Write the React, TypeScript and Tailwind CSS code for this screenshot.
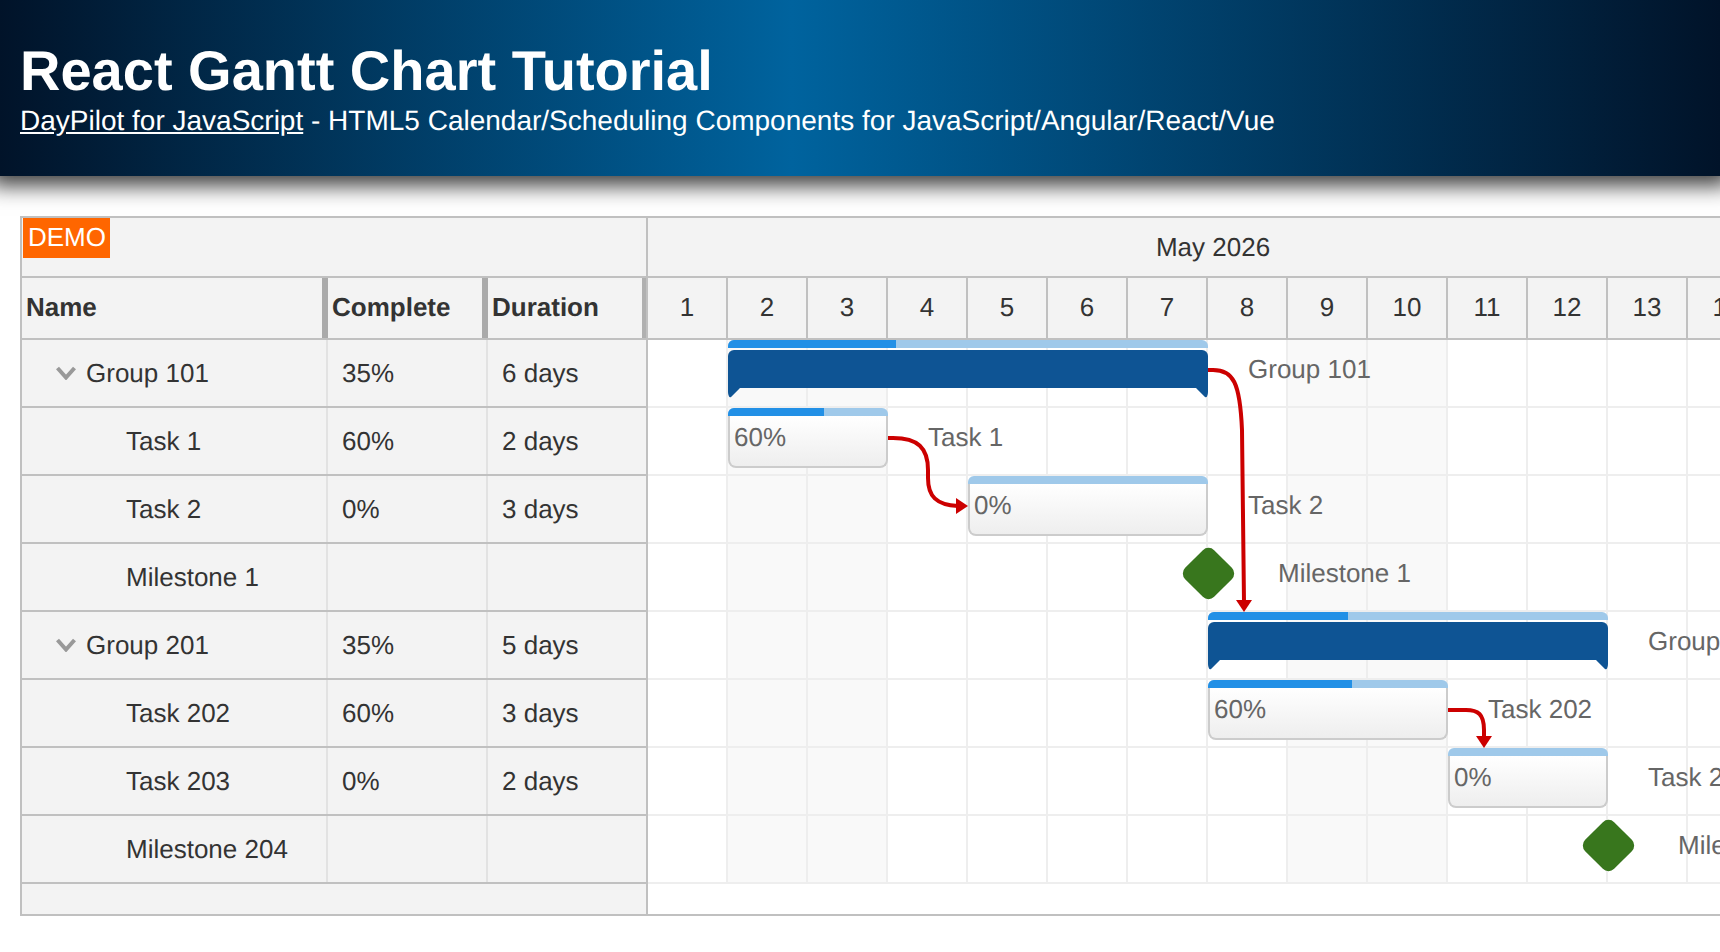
import React from 'react';

const DAY = 80;
const ROW = 68;
const DAYS = [1, 2, 3, 4, 5, 6, 7, 8, 9, 10, 11, 12, 13, 14];
const WEEKEND = [2, 3, 9, 10];

type RowData = { name: string; complete: string; duration: string; group?: boolean };

const ROWS: RowData[] = [
  { name: 'Group 101', complete: '35%', duration: '6 days', group: true },
  { name: 'Task 1', complete: '60%', duration: '2 days' },
  { name: 'Task 2', complete: '0%', duration: '3 days' },
  { name: 'Milestone 1', complete: '', duration: '' },
  { name: 'Group 201', complete: '35%', duration: '5 days', group: true },
  { name: 'Task 202', complete: '60%', duration: '3 days' },
  { name: 'Task 203', complete: '0%', duration: '2 days' },
  { name: 'Milestone 204', complete: '', duration: '' },
];

function Chevron() {
  return (
    <svg width="20" height="14" viewBox="0 0 20 14" className="shrink-0">
      <path d="M1.5 2 L10 11.5 L18.5 2" fill="none" stroke="#999999" strokeWidth="4" />
    </svg>
  );
}

function GroupBar({ row, start, days, pct, label }: { row: number; start: number; days: number; pct: number; label: string }) {
  const width = days * DAY;
  return (
    <>
      <div className="absolute h-[58px]" style={{ left: start * DAY, top: row * ROW, width }}>
        <div className="h-2 rounded-t-[6px] bg-[#9fc9ea] overflow-hidden">
          <div className="h-full bg-[#2290e6]" style={{ width: `${pct}%` }} />
        </div>
        <div className="mt-[2px] h-[38px] rounded-t-[6px] bg-[#0e5494]" />
        <svg width="14" height="10" viewBox="0 0 14 10" className="absolute left-0 top-[48px]">
          <path d="M0 0 H12 L3 9 Q1.5 10 0.8 8 Q0 6 0 4 Z" fill="#0e5494" />
        </svg>
        <svg width="14" height="10" viewBox="0 0 14 10" className="absolute right-0 top-[48px]">
          <path d="M14 0 H2 L11 9 Q12.5 10 13.2 8 Q14 6 14 4 Z" fill="#0e5494" />
        </svg>
      </div>
      <Label row={row} left={start * DAY + width + 40} text={label} />
    </>
  );
}

function TaskBar({ row, start, days, pct, label }: { row: number; start: number; days: number; pct: number; label: string }) {
  const width = days * DAY;
  return (
    <>
      <div className="absolute h-[60px]" style={{ left: start * DAY, top: row * ROW, width }}>
        <div className="h-2 rounded-t-[6px] bg-[#9fc9ea] overflow-hidden">
          <div className="h-full bg-[#2290e6]" style={{ width: `${pct}%` }} />
        </div>
        <div className="h-[52px] rounded-b-[8px] border-x-2 border-b-2 border-[#cccccc] bg-gradient-to-b from-white to-[#eeeeee] px-1 pt-[6px] leading-[30px] text-[#666666]">
          {pct}%
        </div>
      </div>
      <Label row={row} left={start * DAY + width + 40} text={label} />
    </>
  );
}

function Milestone({ row, at, label }: { row: number; at: number; label: string }) {
  return (
    <>
      <div
        className="absolute h-[41px] w-[41px] rotate-45 rounded-lg bg-[#38761d]"
        style={{ left: at * DAY - 20, top: row * ROW + 9 }}
      />
      <Label row={row} left={at * DAY + 70} text={label} />
    </>
  );
}

function Label({ row, left, text }: { row: number; left: number; text: string }) {
  return (
    <div
      className="absolute whitespace-nowrap leading-[30px] text-[#666666]"
      style={{ left, top: row * ROW + 14 }}
    >
      {text}
    </div>
  );
}

function Links() {
  return (
    <svg width="1072" height="544" className="absolute left-0 top-0 pointer-events-none">
      <g transform="translate(-648 -340)" fill="none" stroke="#cc0000" strokeWidth="4">
        <path d="M1208 370 H1213 C1233 370 1240 382 1242 430 L1244 602" />
        <path d="M888 438 H893 C918 438 928 448 928 470 V478 C928 496 936 505 958 506" />
        <path d="M1448 710 H1466 C1478 710 1484 714 1484 730 V738" />
      </g>
      <g transform="translate(-648 -340)" fill="#cc0000">
        <path d="M1236 600 H1252 L1244 612 Z" />
        <path d="M956 498 L968 506 L956 514 Z" />
        <path d="M1476 736 H1492 L1484 748 Z" />
      </g>
    </svg>
  );
}

export default function App() {
  return (
    <div className="h-[952px] overflow-hidden bg-white font-['Liberation_Sans',Arial,sans-serif] text-[26px] text-[#333333] [text-rendering:geometricPrecision]">
      <header className="relative h-[176px] bg-[linear-gradient(to_right,#011329_0%,#00639e_46%,#011329_100%)] px-5 pt-10 text-white shadow-[0_0_20px_10px_rgba(0,0,0,0.75)]">
        <h1 className="text-[56px] font-bold leading-[62px]">React Gantt Chart Tutorial</h1>
        <div className="mt-[2px] text-[28px] leading-[33px]">
          <a href="#" className="underline">DayPilot for JavaScript</a> - HTML5 Calendar/Scheduling Components for JavaScript/Angular/React/Vue
        </div>
      </header>

      <main className="pl-5 pt-10">
        <div className="flex border-y-2 border-l-2 border-[#c0c0c0]">
          {/* left columns */}
          <div className="w-[626px] shrink-0 border-r-2 border-[#c0c0c0] bg-[#f3f3f3]">
            <div className="h-[60px] border-b-2 border-[#c0c0c0] pl-[1px]">
              <div className="flex h-10 w-[87px] items-center justify-center bg-[#ff6600] pb-[2px] pl-[1px] text-white">DEMO</div>
            </div>
            <div className="flex h-[62px] border-b-2 border-[#c0c0c0] font-bold">
              <div className="flex w-[306px] items-center border-r-[6px] border-[#aaaaaa] px-1 pb-[2px]">Name</div>
              <div className="flex w-[160px] items-center border-r-[6px] border-[#aaaaaa] px-1 pb-[2px]">Complete</div>
              <div className="flex flex-1 items-center border-r-4 border-[#b0b0b0] px-1 pb-[2px]">Duration</div>
            </div>
            {ROWS.map((row) => (
              <div key={row.name} className="flex h-[68px] border-b-2 border-[#c0c0c0]">
                <div className="flex w-[306px] items-center border-r-2 border-[#e2e2e2]">
                  {row.group ? (
                    <div className="flex items-center gap-[10px] pl-[34px]">
                      <Chevron />
                      {row.name}
                    </div>
                  ) : (
                    <div className="pl-[104px]">{row.name}</div>
                  )}
                </div>
                <div className="flex w-[160px] items-center border-r-2 border-[#e2e2e2] pl-[14px]">{row.complete}</div>
                <div className="flex flex-1 items-center pl-[14px]">{row.duration}</div>
              </div>
            ))}
            <div className="h-[30px]" />
          </div>

          {/* timeline */}
          <div className="min-w-0 flex-1 overflow-hidden">
            <div className="flex h-[60px] items-center justify-center border-b-2 border-[#c0c0c0] bg-[#f3f3f3] pl-[58px]">May 2026</div>
            <div className="flex h-[62px] border-b-2 border-[#c0c0c0] bg-[#f3f3f3]">
              {DAYS.map((day) => (
                <div key={day} className="flex w-20 shrink-0 items-center justify-center border-r-2 border-[#c0c0c0] pb-[2px]">
                  {day}
                </div>
              ))}
            </div>
            <div className="relative">
              {ROWS.map((row) => (
                <div key={row.name} className="flex h-[68px]">
                  {DAYS.map((day) => (
                    <div
                      key={day}
                      className={
                        WEEKEND.includes(day)
                          ? 'w-20 shrink-0 border-b-2 border-r-2 border-[#eeeeee] bg-[#f9f9f9]'
                          : 'w-20 shrink-0 border-b-2 border-r-2 border-[#eeeeee]'
                      }
                    />
                  ))}
                </div>
              ))}
              <GroupBar row={0} start={1} days={6} pct={35} label="Group 101" />
              <TaskBar row={1} start={1} days={2} pct={60} label="Task 1" />
              <TaskBar row={2} start={4} days={3} pct={0} label="Task 2" />
              <Milestone row={3} at={7} label="Milestone 1" />
              <GroupBar row={4} start={7} days={5} pct={35} label="Group 201" />
              <TaskBar row={5} start={7} days={3} pct={60} label="Task 202" />
              <TaskBar row={6} start={10} days={2} pct={0} label="Task 203" />
              <Milestone row={7} at={12} label="Milestone 204" />
              <Links />
            </div>
          </div>
        </div>
      </main>
    </div>
  );
}
